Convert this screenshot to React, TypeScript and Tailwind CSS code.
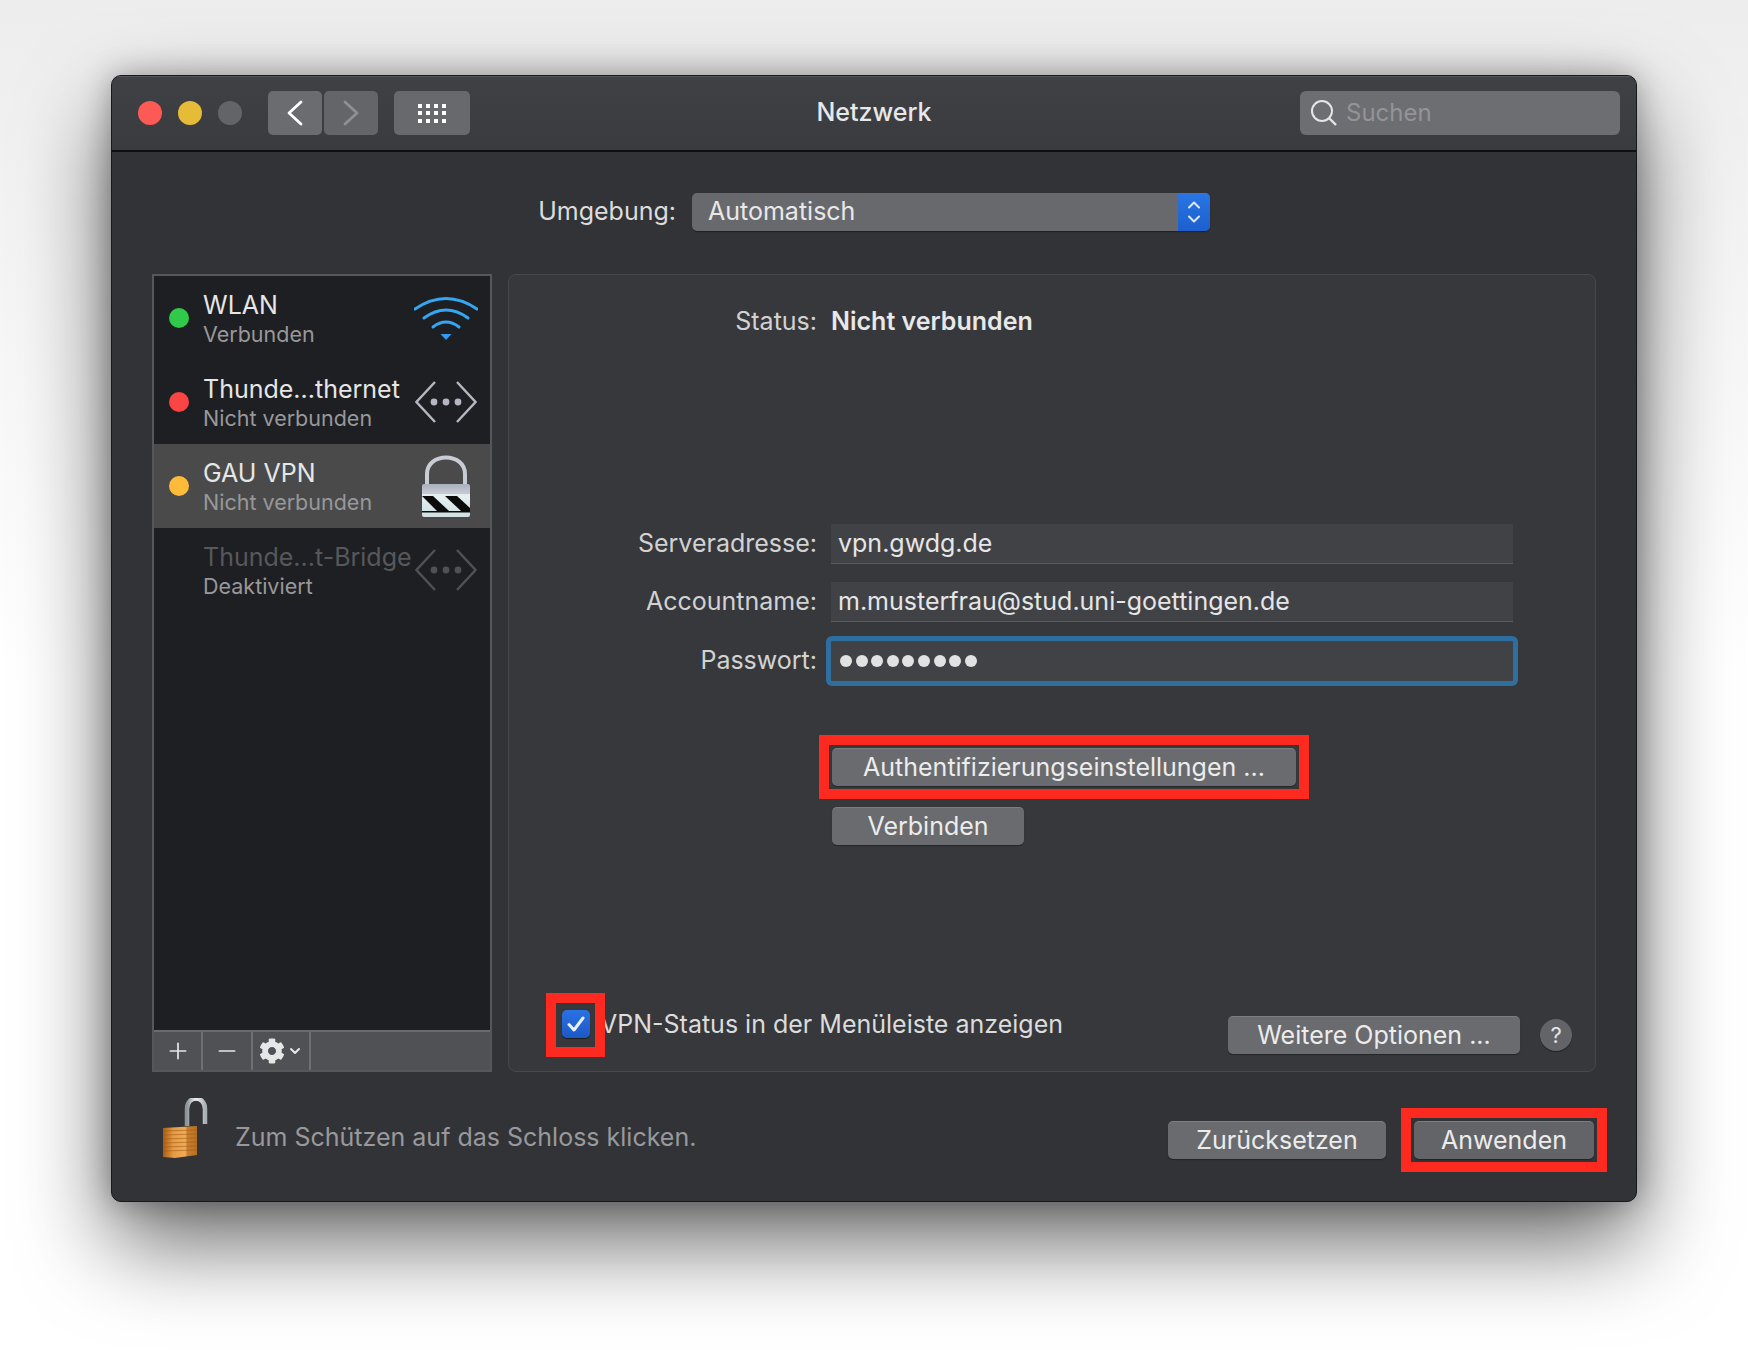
import { ChevronDown, ChevronUp, Minus, Plus } from "lucide-react";
import { FaCog } from "react-icons/fa";

const font = { fontFamily: "Inter, 'Noto Sans', sans-serif" };

const RedBox = ({ className }: { className: string }) => (
  <div className={`absolute z-10 border-[10px] border-[#ff2a1f] pointer-events-none ${className}`} />
);

const MacButton = ({ label, className }: { label: string; className: string }) => (
  <div
    className={`flex h-[38px] items-center justify-center rounded-[5px] bg-[#6a6b6e] text-[25px] text-[#ececec] border-t border-t-[#7d7e81] shadow-[0_1px_1px_rgba(0,0,0,0.35)] ${className}`}
  >
    {label}
  </div>
);

const WifiIcon = () => (
  <svg width="64" height="48" viewBox="0 0 64 48" fill="none" stroke="#35a6f2" strokeWidth="3" strokeLinecap="round">
    <path d="M1 15 Q32 -6 63 15" />
    <path d="M10 24 Q32 8 54 24" />
    <path d="M19 33 Q32 23 45 33" />
    <path d="M26.500 40 L37.500 40 L32 46 Z" fill="#2f9cf0" stroke="none" />
  </svg>
);

const EthernetIcon = ({ color }: { color: string }) => (
  <svg width="62" height="42" viewBox="0 0 62 42" fill="none" stroke={color} strokeWidth="2.400">
    <path d="M20 1 L1.500 21 L20 41" />
    <path d="M42 1 L60.500 21 L42 41" />
    <circle cx="19" cy="21" r="3.400" fill={color} stroke="none" />
    <circle cx="31" cy="21" r="3.400" fill={color} stroke="none" />
    <circle cx="43" cy="21" r="3.400" fill={color} stroke="none" />
  </svg>
);

const VpnLock = () => (
  <svg width="50" height="62" viewBox="0 0 50 62">
    <defs>
      <linearGradient id="vpnBody" x1="0" y1="0" x2="0" y2="1">
        <stop offset="0" stopColor="#aab0bd" />
        <stop offset="0.3" stopColor="#c7ccd4" />
        <stop offset="0.32" stopColor="#e6f1f2" />
        <stop offset="1" stopColor="#cfdfe2" />
      </linearGradient>
      <clipPath id="vpnBand">
        <rect x="1" y="40" width="48" height="16" />
      </clipPath>
    </defs>
    <path d="M6 30 V19 C6 -3 44 -3 44 19 V30" fill="none" stroke="#c8ccd4" strokeWidth="4" />
    <rect x="1" y="29" width="48" height="33" rx="2" fill="url(#vpnBody)" />
    <g clipPath="url(#vpnBand)">
      <path d="M1 41 L12 41 L28 56 L16 56 Z" fill="#0b0b0b" />
      <path d="M24 41 L36 41 L49 53 L49 56 L40 56 Z" fill="#0b0b0b" />
    </g>
    <rect x="1" y="56" width="48" height="1.500" fill="#0b0b0b" />
  </svg>
);

const GoldLock = () => (
  <svg width="46" height="60" viewBox="0 0 46 60">
    <defs>
      <linearGradient id="goldBody" x1="0" y1="0" x2="1" y2="0">
        <stop offset="0" stopColor="#a85c12" />
        <stop offset="0.3" stopColor="#e59a43" />
        <stop offset="0.65" stopColor="#f0ab57" />
        <stop offset="0.72" stopColor="#c77f2d" />
        <stop offset="1" stopColor="#b96f20" />
      </linearGradient>
      <linearGradient id="steel" x1="0" y1="0" x2="1" y2="0">
        <stop offset="0" stopColor="#8d959b" />
        <stop offset="0.5" stopColor="#eef2f4" />
        <stop offset="1" stopColor="#aab1b6" />
      </linearGradient>
    </defs>
    <path d="M24 28 V11 C24 -3 42 -3 42 11 V26" fill="none" stroke="url(#steel)" strokeWidth="4.500" />
    <path d="M0 30 L34 28 V57 L12 60 L0 59 Z" fill="url(#goldBody)" />
    {[33, 37, 41, 45, 49, 53].map((y) => (
      <path key={y} d={`M0 ${y} L34 ${y - 1}`} stroke="#9c5a14" strokeOpacity="0.55" strokeWidth="1" />
    ))}
  </svg>
);

const ListRow = ({
  name,
  sub,
  dot,
  icon,
  selected,
  dim,
}: {
  name: string;
  sub: string;
  dot?: string;
  icon: React.ReactNode;
  selected?: boolean;
  dim?: boolean;
}) => (
  <div className={`flex h-[84px] items-center ${selected ? "bg-[#4a4a4a]" : ""}`}>
    <div className="ml-[15px] w-[20px] h-[20px] rounded-full" style={{ background: dot }} />
    <div className="ml-[14px] flex flex-col">
      <span className={`text-[25px] leading-[32px] ${dim ? "text-[#57585b]" : "text-[#e6e6e6]"}`}>{name}</span>
      <span className="text-[21.500px] leading-[26px] text-[#98989a]">{sub}</span>
    </div>
    <div className="ml-auto mr-[12px] flex w-[64px] justify-center">{icon}</div>
  </div>
);

const FieldRow = ({ label, children }: { label: string; children: React.ReactNode }) => (
  <div className="flex items-center">
    <span className="w-[308px] text-right text-[25px] text-[#d2d2d3]">{label}</span>
    <div className="ml-[14px]">{children}</div>
  </div>
);

export default function App() {
  return (
    <div
      style={font}
      className="w-[1748px] h-[1350px] overflow-hidden bg-gradient-to-b from-[#ededed] via-white to-white pt-[75px] pl-[111px]"
    >
      <div className="flex h-[1127px] w-[1526px] flex-col overflow-hidden rounded-[10px] border border-[#17181a] bg-[#323337] shadow-[0_40px_90px_rgba(0,0,0,0.6),0_0_30px_rgba(0,0,0,0.3)]">
        {/* title bar */}
        <div className="grid h-[76px] shrink-0 grid-cols-[1fr_auto_1fr] items-center border-b-2 border-b-[#0f0f10] bg-gradient-to-b from-[#404145] to-[#3a3b3f] shadow-[inset_0_1px_0_#55565a]">
          <div className="flex items-center pl-[26px]">
            <div className="h-[24px] w-[24px] rounded-full bg-[#fe5a55]" />
            <div className="ml-[16px] h-[24px] w-[24px] rounded-full bg-[#e6bb37]" />
            <div className="ml-[16px] h-[24px] w-[24px] rounded-full bg-[#636468]" />
            <div className="ml-[26px] flex h-[44px] w-[54px] items-center justify-center rounded-[5px] bg-[#6b6c70]">
              <svg width="16" height="26" viewBox="0 0 16 26" fill="none" stroke="#ffffff" strokeWidth="2.800" strokeLinecap="round" strokeLinejoin="round">
                <path d="M14 2 L2 13 L14 24" />
              </svg>
            </div>
            <div className="ml-[2px] flex h-[44px] w-[54px] items-center justify-center rounded-[5px] bg-[#646569]">
              <svg width="16" height="26" viewBox="0 0 16 26" fill="none" stroke="#8f9093" strokeWidth="2.800" strokeLinecap="round" strokeLinejoin="round">
                <path d="M2 2 L14 13 L2 24" />
              </svg>
            </div>
            <div className="ml-[16px] flex h-[44px] w-[76px] items-center justify-center rounded-[5px] bg-[#68696d]">
              <div className="grid grid-cols-4 gap-x-[4.300px] gap-y-[3.500px]">
                {Array.from({ length: 12 }).map((_, i) => (
                  <div key={i} className="h-[4px] w-[4px] bg-white" />
                ))}
              </div>
            </div>
          </div>
          <div className="text-[25px] font-medium text-[#e8e8e8]">Netzwerk</div>
          <div className="flex justify-end pr-[16px]">
            <div className="flex h-[44px] w-[320px] items-center rounded-[6px] bg-[#6d6e71]">
              <svg className="ml-[10px]" width="28" height="28" viewBox="0 0 28 28" fill="none" stroke="#e6e6e6" strokeWidth="2">
                <circle cx="12" cy="12" r="10" />
                <path d="M19 19 L26 26" strokeWidth="2.400" />
              </svg>
              <span className="ml-[8px] text-[24px] text-[#949497]">Suchen</span>
            </div>
          </div>
        </div>

        {/* environment popup */}
        <div className="mt-[41px] flex h-[38px] shrink-0 items-center">
          <span className="w-[564px] text-right text-[25px] text-[#dcdcdc]">Umgebung:</span>
          <div className="ml-[16px] flex h-[38px] w-[518px] items-center overflow-hidden rounded-[5px] bg-[#68696d] shadow-[0_1px_1px_rgba(0,0,0,0.4)]">
            <span className="ml-[16px] flex-1 text-[25px] text-[#e8e8e8]">Automatisch</span>
            <div className="flex h-full w-[32px] flex-col items-center justify-center bg-gradient-to-b from-[#2a76e4] to-[#1c5fce] text-[#dce8fb]">
              <ChevronUp size={20} strokeWidth={2.400} className="-mb-[3px]" />
              <ChevronDown size={20} strokeWidth={2.400} className="-mt-[3px]" />
            </div>
          </div>
        </div>

        {/* list + panel */}
        <div className="mt-[43px] flex h-[798px] shrink-0 gap-[16px] pl-[40px]">
          <div className="flex w-[340px] flex-col border-2 border-[#56575a] bg-[#1e1f22]">
            <ListRow name="WLAN" sub="Verbunden" dot="#30c94a" icon={<WifiIcon />} />
            <ListRow name="Thunde...thernet" sub="Nicht verbunden" dot="#fb4444" icon={<EthernetIcon color="#b4b8c3" />} />
            <ListRow name="GAU VPN" sub="Nicht verbunden" dot="#febb39" icon={<VpnLock />} selected />
            <ListRow name="Thunde...t-Bridge" sub="Deaktiviert" icon={<EthernetIcon color="#505155" />} dim />
            <div className="mt-auto -mb-[0px] flex h-[40px] border-t-2 border-t-[#6a6b6e] bg-[#505155] text-[#e6e6e6]">
              <div className="flex w-[49px] items-center justify-center border-r-2 border-r-[#6f7073]">
                <Plus size={26} strokeWidth={1.600} />
              </div>
              <div className="flex w-[50px] items-center justify-center border-r-2 border-r-[#6f7073]">
                <Minus size={26} strokeWidth={1.600} />
              </div>
              <div className="flex w-[58px] items-center justify-center gap-[2px] border-r-2 border-r-[#6f7073]">
                <FaCog size={26} />
                <ChevronDown size={16} strokeWidth={3} />
              </div>
            </div>
          </div>

          <div className="flex w-[1088px] flex-col rounded-[8px] border border-[#47484c] bg-[#37383c] pt-[31px] pb-[17px] pr-[23px]">
            <div className="flex h-[32px] items-center">
              <span className="w-[308px] text-right text-[25px] text-[#d2d2d3]">Status:</span>
              <span className="ml-[14px] text-[25px] font-semibold text-[#e8e8e8]">Nicht verbunden</span>
            </div>

            <div className="mt-[186px]">
              <FieldRow label="Serveradresse:">
                <div className="flex h-[40px] w-[682px] items-center border-b border-b-[#5a5b5e] bg-[#414246] pl-[7px] text-[25px] text-[#e6e6e6]">
                  vpn.gwdg.de
                </div>
              </FieldRow>
            </div>
            <div className="mt-[18px]">
              <FieldRow label="Accountname:">
                <div className="flex h-[40px] w-[682px] items-center border-b border-b-[#5a5b5e] bg-[#414246] pl-[7px] text-[25px] text-[#e6e6e6]">
                  m.musterfrau@stud.uni-goettingen.de
                </div>
              </FieldRow>
            </div>
            <div className="mt-[19px]">
              <FieldRow label="Passwort:">
                <div className="flex h-[40px] w-[682px] items-center gap-[3.600px] rounded-[1px] bg-[#414246] pl-[9px] outline-[5px] outline-[#2f6f9f]">
                  {Array.from({ length: 9 }).map((_, i) => (
                    <div key={i} className="h-[12px] w-[12px] rounded-full bg-[#e2e2e2]" />
                  ))}
                </div>
              </FieldRow>
            </div>

            <div className="relative ml-[323px] mt-[67px] w-[464px]">
              <MacButton label="Authentifizierungseinstellungen ..." className="w-[464px]" />
              <RedBox className="-inset-[13px]" />
            </div>
            <MacButton label="Verbinden" className="ml-[323px] mt-[21px] w-[192px]" />

            <div className="mt-auto flex items-end">
              <div className="mb-[11px] ml-[53px] flex items-center">
                <div className="relative h-[28px] w-[28px]">
                  <div className="flex h-[28px] w-[28px] items-center justify-center rounded-[5px] bg-gradient-to-b from-[#2a72e4] to-[#1d58c4] shadow-[0_1px_1px_rgba(0,0,0,0.5)]">
                    <svg width="20" height="18" viewBox="0 0 20 18" fill="none" stroke="#e8effc" strokeWidth="3" strokeLinecap="round" strokeLinejoin="round">
                      <path d="M3 9.500 L8 15 L17 3" />
                    </svg>
                  </div>
                  <RedBox className="-left-[16px] -right-[15px] -top-[17px] -bottom-[19px]" />
                </div>
                <span className="ml-[10px] text-[25px] text-[#dcdcdc]">VPN-Status in der Menüleiste anzeigen</span>
              </div>
              <MacButton label="Weitere Optionen ..." className="ml-auto w-[292px]" />
              <div className="mb-[3px] ml-[20px] flex h-[32px] w-[32px] items-center justify-center rounded-full bg-[#636467] text-[22px] text-[#e4e4e4] shadow-[0_1px_1px_rgba(0,0,0,0.4)]">
                ?
              </div>
            </div>
          </div>
        </div>

        {/* footer */}
        <div className="mt-[26px] flex items-start pl-[51px]">
          <GoldLock />
          <span className="ml-[26px] mt-[21px] text-[25px] text-[#99999b]">Zum Schützen auf das Schloss klicken.</span>
          <MacButton label="Zurücksetzen" className="ml-auto mt-[23px] w-[218px]" />
          <div className="relative ml-[28px] mr-[42px] mt-[23px] w-[180px]">
            <MacButton label="Anwenden" className="w-[180px] bg-[#636468]" />
            <RedBox className="-inset-[13px]" />
          </div>
        </div>
      </div>
    </div>
  );
}
